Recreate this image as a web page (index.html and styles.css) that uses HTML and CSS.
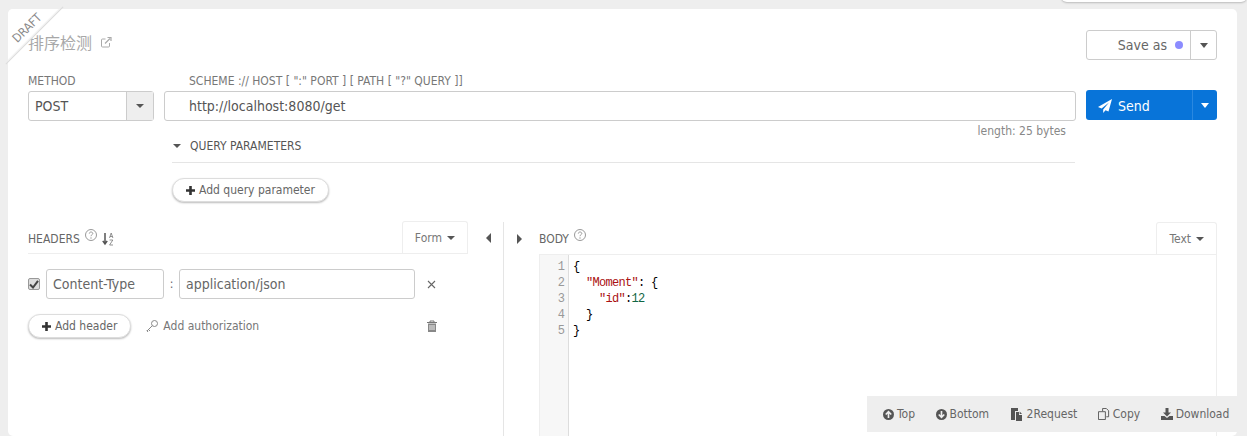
FILE: index.html
```html
<!DOCTYPE html>
<html>
<head>
<meta charset="utf-8">
<title>Request</title>
<link rel="stylesheet" href="styles.css">
</head>
<body>
<div class="top-tab"></div>
<main class="card">
  <div class="ribbon"><span>DRAFT</span></div>
  <header class="title-row">
    <h1 class="title">排序检测
      <svg class="ext" viewBox="0 0 12 12" width="12" height="12"><path d="M9.500 7v3a1 1 0 0 1-1 1h-6a1 1 0 0 1-1-1V4a1 1 0 0 1 1-1h3" fill="none" stroke="#aaa" stroke-width="1"/><path d="M5 7.500 10 2.500M7.500 1.500h3.500V5" fill="none" stroke="#aaa" stroke-width="1.200"/></svg>
    </h1>
    <div class="split-btn save">
      <span class="save-main">Save as <i class="dot"></i></span>
      <span class="save-caret"><i class="caret"></i></span>
    </div>
  </header>

  <section class="request">
    <div class="method-col">
      <label class="lbl">METHOD</label>
      <div class="method">
        <span class="method-val">POST</span>
        <span class="method-caret"><i class="caret small"></i></span>
      </div>
    </div>
    <div class="url-col">
      <label class="lbl url-lbl">SCHEME :// HOST [ ":" PORT ] [ PATH [ "?" QUERY ]]</label>
      <div class="url">http://localhost:8080/get</div>
      <div class="length">length: 25 bytes</div>
    </div>
    <div class="send">
      <span class="send-main">
        <svg viewBox="0 0 14 14" width="14" height="14"><path d="M14 0 0 8l3.600 1.600L11 3.500 5.200 10.400V14l2.300-2.800 3 1.300z" fill="#fff"/></svg>
        Send
      </span>
      <span class="send-caret"><i class="caret white"></i></span>
    </div>
  </section>

  <section class="query">
    <div class="query-head"><i class="caret small"></i>QUERY PARAMETERS</div>
    <button class="pill query-add"><svg class="plus" viewBox="0 0 9 9" width="9" height="9"><path d="M3.200 0h2.600v3.200H9v2.600H5.800V9H3.200V5.800H0V3.200h3.200z" fill="#333"/></svg>Add query parameter</button>
  </section>

  <section class="panes">
    <div class="pane-left">
      <div class="pane-head">
        <span class="pane-title">HEADERS
          <svg class="help" viewBox="0 0 12 12" width="12" height="12"><circle cx="6" cy="6" r="5.500" fill="none" stroke="#999"/><path d="M4.300 4.600C4.400 3.600 5 3 6 3s1.800.6 1.800 1.500C7.800 5.700 6 5.700 6 7.200" fill="none" stroke="#999"/><circle cx="6" cy="9" r=".7" fill="#999"/></svg>
          <svg class="sort" viewBox="0 0 12 14" width="12" height="14"><path d="M3 1v10M.8 8.800 3 12l2.200-3.200" fill="none" stroke="#555" stroke-width="1.500"/><path d="M7.500 6 9.200 1l1.700 5M8 4.500h2.500M7.600 8h3.200L7.600 13h3.400" fill="none" stroke="#777" stroke-width=".8"/></svg>
        </span>
        <span class="tab">Form <i class="caret small"></i></span>
      </div>
      <div class="hdr-row">
        <span class="check"><svg viewBox="0 0 10 10" width="10" height="10"><path d="M1 5.500 4 8.500 9 1.800" fill="none" stroke="#444" stroke-width="2"/></svg></span>
        <div class="field name">Content-Type</div>
        <span class="colon">:</span>
        <div class="field value">application/json</div>
        <svg class="close" viewBox="0 0 9 9" width="9" height="9"><path d="M1 1 8 8M8 1 1 8" stroke="#666" stroke-width="1.100"/></svg>
      </div>
      <div class="hdr-actions">
        <button class="pill add-header"><svg class="plus" viewBox="0 0 9 9" width="9" height="9"><path d="M3.200 0h2.600v3.200H9v2.600H5.800V9H3.200V5.800H0V3.200h3.200z" fill="#333"/></svg>Add header</button>
        <span class="auth">
          <svg viewBox="0 0 12 12" width="12" height="12"><circle cx="8.500" cy="3.500" r="3" fill="none" stroke="#888"/><path d="M6.300 5.700 1 11M2.500 9.500 4 11M.8 10.500 2 12" fill="none" stroke="#888"/></svg>
          Add authorization
        </span>
        <svg class="trash" viewBox="0 0 10 12" width="10" height="12"><path d="M0 2.500h10M3 2.500V1h4v1.500" fill="none" stroke="#777"/><path d="M1 3.500h8V12H1z" fill="#888"/><path d="M3 5v5M5 5v5M7 5v5" stroke="#eee"/></svg>
      </div>
    </div>
    <div class="arrows-left"><i class="tri left"></i></div>
    <div class="pane-right">
      <div class="pane-head right-head">
        <i class="tri right"></i>
        <span class="pane-title body-title">BODY
          <svg class="help" viewBox="0 0 12 12" width="12" height="12"><circle cx="6" cy="6" r="5.500" fill="none" stroke="#999"/><path d="M4.300 4.600C4.400 3.600 5 3 6 3s1.800.6 1.800 1.500C7.800 5.700 6 5.700 6 7.200" fill="none" stroke="#999"/><circle cx="6" cy="9" r=".7" fill="#999"/></svg>
        </span>
        <span class="tab tab-text">Text <i class="caret small"></i></span>
      </div>
      <div class="editor">
        <div class="gutter"><div>1</div><div>2</div><div>3</div><div>4</div><div>5</div></div>
        <div class="code">
          <div class="line">{</div>
          <div class="line">  <span class="k">"Moment"</span>: {</div>
          <div class="line">    <span class="k">"id"</span>:<span class="n">12</span></div>
          <div class="line">  }</div>
          <div class="line">}</div>
        </div>
      </div>
    </div>
  </section>
</main>
<nav class="toolbar">
  <span class="tool"><svg viewBox="0 0 12 12" width="11" height="11"><circle cx="6" cy="6" r="6" fill="#555"/><path d="M6 9.800V3M3 6l3-3 3 3" fill="none" stroke="#eee" stroke-width="1.800"/></svg>Top</span>
  <span class="tool"><svg viewBox="0 0 12 12" width="11" height="11"><circle cx="6" cy="6" r="6" fill="#555"/><path d="M6 2.200V9M3 6l3 3 3-3" fill="none" stroke="#eee" stroke-width="1.800"/></svg>Bottom</span>
  <span class="tool tool-req"><svg viewBox="0 0 12 13" width="12" height="13"><path d="M0 0h7v3H4v9H0z" fill="#555"/><path d="M5 4h3v3h3v6H5z" fill="#555"/><path d="M8.700 3.500 11 6H8.700z" fill="#555"/></svg>2Request</span>
  <span class="tool"><svg viewBox="0 0 13 13" width="12" height="12"><path d="M5 .5h4l2.500 2.500v6.500H9M5 .5v3" fill="none" stroke="#555"/><path d="M.5 4H8v8.500H.5z" fill="none" stroke="#555"/></svg>Copy</span>
  <span class="tool"><svg viewBox="0 0 12 12" width="12" height="12"><path d="M4.500 0h3v4.500H10L6 8.500 2 4.500h2.500z" fill="#555"/><path d="M0 8h3.500L6 10l2.500-2H12v4H0z" fill="#555"/></svg>Download</span>
</nav>
</body>
</html>
```
FILE: styles.css
```css
* { box-sizing: border-box; }
html, body { margin: 0; height: 436px; overflow: hidden; }
body {
  background: #eeeeee;
  font-family: "DejaVu Sans Condensed", "DejaVu Sans", sans-serif;
  font-stretch: condensed;
  font-size: 12px;
  color: #666;
  position: relative;
}
i { font-style: normal; }

.top-tab {
  position: absolute; left: 1061px; top: -10px; width: 186px; height: 12px;
  background: #fff; border-radius: 6px; box-shadow: 0 1px 2px #bbb;
}
.card {
  position: relative;
  margin: 9px 10px 0 8px;
  height: 427px;
  background: #fff;
  border-radius: 5px;
  padding: 21px 20px 0 20px;
}
.ribbon {
  position: absolute; left: 0; top: 0; width: 53px; height: 53px; z-index: 1;
  background: linear-gradient(135deg, #fff 50%, transparent 50%);
  border-top-left-radius: 5px;
}
.ribbon::after {
  content: ""; position: absolute; left: -14px; top: 26px; width: 81px; height: 1px;
  background: #dcdcdc; box-shadow: 0 -1px 1px #eee;
  transform: rotate(-45deg);
}
.ribbon span {
  position: absolute; left: -7px; top: 11px; width: 52px; height: 16px;
  transform: rotate(-45deg);
  color: #888;
  font-size: 12px; line-height: 16px; text-align: center;
}

.title-row { display: flex; justify-content: space-between; height: 30px; }
.title {
  margin: 0; font-size: 16px; font-weight: 400; line-height: 24px; height: 24px;
  color: #a8a8a8; font-family: "Noto Sans CJK SC", sans-serif;
  display: flex; align-items: center; gap: 8px;
}
.split-btn.save {
  display: flex; width: 131px; height: 30px;
  border: 1px solid #ccc; border-radius: 3px;
  font-size: 14px; color: #666;
}
.save-main {
  flex: 1; display: flex; align-items: center; justify-content: flex-end; gap: 8px;
  padding-right: 7px; border-right: 1px solid #ccc;
}
.save-caret { width: 25px; display: flex; align-items: center; justify-content: center; }
.dot { width: 8px; height: 8px; border-radius: 50%; background: #8c8cff; }
.caret {
  display: inline-block; width: 0; height: 0;
  border-left: 4.500px solid transparent; border-right: 4.500px solid transparent;
  border-top: 5px solid #555;
}
.caret.small { border-left-width: 4px; border-right-width: 4px; border-top-width: 4px; }
.caret.white { border-top-color: #fff; }

.request { display: flex; gap: 10px; margin-top: 14px; height: 59px; }
.lbl { display: block; height: 17px; line-height: 14px; font-size: 12px; color: #777; }
.method-col { width: 126px; }
.method {
  display: flex; height: 30px; border: 1px solid #ccc; border-radius: 3px;
  font-size: 14px; color: #555;
}
.method-val { flex: 1; line-height: 28px; padding-left: 6px; }
.method-caret {
  width: 27px; background: #eee; border-left: 1px solid #ccc;
  display: flex; align-items: center; justify-content: center;
}
.url-col { flex: 1; position: relative; }
.url-lbl { padding-left: 25px; }
.url {
  height: 30px; border: 1px solid #ccc; border-radius: 3px;
  padding-left: 24px; line-height: 28px; font-size: 14px; color: #555;
}
.length { text-align: right; padding-right: 10px; font-size: 12px; color: #888; margin-top: 3px; line-height: 14px; }
.send {
  width: 131px; height: 30px; margin-top: 16px; display: flex;
  background: #0874d9; border-radius: 3px; color: #fff; font-size: 14px;
}
.send-main {
  flex: 1; display: flex; align-items: center; gap: 6px; padding: 1px 0 0 12px;
  border-right: 1px solid #2a88e0;
}
.send-caret { width: 24px; display: flex; align-items: center; justify-content: center; }

.query { margin: 0 142px 0 144px; }
.query-head {
  height: 30px; border-bottom: 1px solid #e5e5e5; font-size: 12px; color: #555;
  display: flex; align-items: center; gap: 9px; padding: 0 0 4px 1px;
}
.pill {
  display: inline-flex; align-items: center; gap: 4px; white-space: nowrap;
  height: 24px; padding: 0 13px; background: #fff;
  border: 1px solid #ddd; border-radius: 12px; box-shadow: 0 1px 2px #bbb;
  font: 12px "DejaVu Sans Condensed", "DejaVu Sans", sans-serif; color: #666;
}
.plus { flex: none; }
.query-add { margin-top: 15px; }

.panes { display: flex; margin-top: 20px; height: 214px; }
.pane-left { width: 440px; flex: none; }
.pane-head {
  display: flex; align-items: flex-end; justify-content: space-between;
  height: 32px; border-bottom: 1px solid #eee;
}
.pane-title { font-size: 12px; color: #666; display: flex; gap: 5px; padding-bottom: 7px; align-items: center; }
.help { margin-top: -8px; }
.tab {
  height: 32px; border: 1px solid #eee; border-bottom: 0; border-radius: 3px 3px 0 0;
  padding: 0 12px; display: flex; align-items: center; gap: 5px;
  font-size: 12px; color: #777;
}
.hdr-row { display: flex; align-items: center; margin-top: 15px; height: 30px; }
.check {
  width: 12px; height: 12px; border: 1px solid #999; border-radius: 2px; background: #ddd;
  display: flex; align-items: center; justify-content: center; margin-right: 6px;
}
.field {
  height: 30px; border: 1px solid #ccc; border-radius: 3px;
  line-height: 28px; font-size: 14px; color: #666; padding-left: 6px;
}
.name { width: 118px; }
.colon { width: 15px; text-align: center; }
.value { width: 236px; }
.close { margin-left: 12px; }
.hdr-actions { display: flex; align-items: center; margin-top: 15px; }
.auth { display: flex; align-items: center; gap: 5px; margin-left: 15px; font-size: 12px; color: #777; white-space: nowrap; }
.trash { margin-left: 168px; flex: none; }

.arrows-left {
  width: 36px; flex: none; display: flex; justify-content: center; padding: 11px 0 0 6px;
  border-right: 1px solid #e5e5e5;
}
.tri { display: block; width: 0; height: 0; border-top: 5px solid transparent; border-bottom: 5px solid transparent; }
.tri.left { border-right: 5px solid #555; }
.tri.right { border-left: 5px solid #555; margin: 0 0 10px 13px; }
.pane-right { flex: 1; }
.right-head { border-bottom: 0; }
.body-title { margin-left: 17px; margin-right: auto; padding-bottom: 8px; }
.editor {
  display: flex; height: 182px;
  border-top: 1px solid #eee; border-left: 1px solid #eee; border-right: 1px solid #eee;
  margin-left: 35px;
  font: 12px/16px "Liberation Mono", monospace;
}
.gutter {
  width: 29px; background: #f7f7f7; border-right: 1px solid #ddd;
  text-align: right; padding: 4px 3px 0 0; color: #999;
}
.code { padding: 4px 0 0 4px; color: #000; letter-spacing: -.7px; }
.line { white-space: pre; height: 16px; }
.k { color: #a11; }
.n { color: #164; }

.toolbar {
  position: absolute; left: 867px; top: 396px; width: 370px; height: 36px;
  background: #eee; display: flex; align-items: center; gap: 20.5px; padding-left: 16px;
  font-size: 12px; color: #666;
}
.tool { display: flex; align-items: center; gap: 3px; }
.tool-req { gap: 4px; margin-left: 1px; }
```
